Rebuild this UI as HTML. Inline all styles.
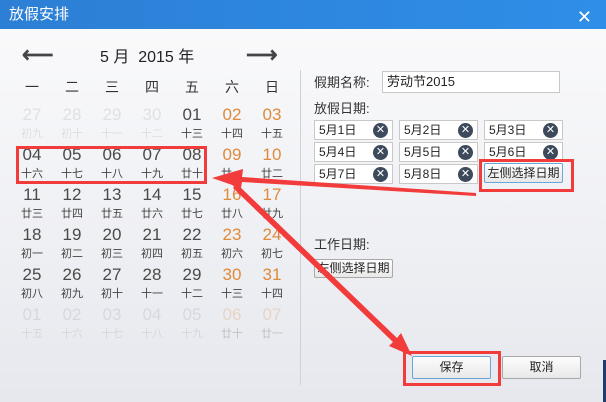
<!DOCTYPE html>
<html><head><meta charset="utf-8"><style>
*{margin:0;padding:0;box-sizing:border-box}
body{width:606px;height:402px;overflow:hidden;font-family:"Liberation Sans","Noto Sans CJK SC",sans-serif;background:linear-gradient(#fbfbfc,#e6e8ee);position:relative;color:#333}
.title{position:absolute;left:0;top:0;width:606px;height:29px;background:linear-gradient(90deg,#2c7fd4,#2f8ee8);color:#fff;font-size:15px;line-height:29px;padding-left:9px}
.x{position:absolute;right:14px;top:3px;color:#fff;font-size:18px}
.a{position:absolute;font-size:15px}
.c{position:absolute;width:40px;text-align:center}
.n{font-size:17px;color:#4a4a4a}
.l{font-size:11px;color:#444}
.o{color:#e08a3c}
.f{opacity:.12}
.fo{opacity:.25}
.lbl{position:absolute;font-size:13px;color:#333}
.box{position:absolute;width:79px;height:20px;background:#fff;border:1px solid #c8c8c8;font-size:12px;line-height:18px;padding-left:4px;color:#222}
.box i{position:absolute;right:4px;top:2px;width:15px;height:15px;border-radius:50%;background:#3c4a5c;color:#fff;font-style:normal;font-size:11px;line-height:15px;text-align:center}
.btn{position:absolute;border:1px solid #a8a8a8;background:linear-gradient(#fdfdfd,#e8e8e8);font-size:12px;text-align:center;border-radius:2px;color:#222}
.rb{position:absolute;border:3px solid #f23b3b}
</style></head><body>
<div class="title">放假安排<span class="x">✕</span></div>
<div class="a" style="left:22px;top:42px;font-size:22px;color:#444;font-weight:bold">⟵</div>
<div class="a" style="left:100px;top:43px;font-size:16px;color:#222">5 月&nbsp; 2015 年</div>
<div class="a" style="left:246px;top:42px;font-size:22px;color:#444;font-weight:bold">⟶</div>
<div style="position:absolute;left:300px;top:70px;width:1px;height:315px;background:#cfd1d6"></div>
<div id="cal"></div>
<div class="lbl" style="left:314px;top:72px">假期名称:</div>
<div class="box" style="left:382px;top:71px;width:178px;height:22px;font-size:13px;line-height:20px">劳动节2015</div>
<div class="lbl" style="left:314px;top:98px">放假日期:</div>
<div class="box" style="left:314px;top:120px">5月1日<i>✕</i></div>
<div class="box" style="left:399px;top:120px">5月2日<i>✕</i></div>
<div class="box" style="left:484px;top:120px">5月3日<i>✕</i></div>
<div class="box" style="left:314px;top:142px">5月4日<i>✕</i></div>
<div class="box" style="left:399px;top:142px">5月5日<i>✕</i></div>
<div class="box" style="left:484px;top:142px">5月6日<i>✕</i></div>
<div class="box" style="left:314px;top:164px">5月7日<i>✕</i></div>
<div class="box" style="left:399px;top:164px">5月8日<i>✕</i></div>
<div class="btn" style="left:484px;top:163px;width:79px;height:20px;line-height:18px;border-color:#6aa6d8">左侧选择日期</div>
<div class="lbl" style="left:314px;top:234px">工作日期:</div>
<div class="btn" style="left:314px;top:259px;width:79px;height:19px;line-height:17px">左侧选择日期</div>
<div class="btn" style="left:412px;top:356px;width:79px;height:23px;line-height:21px;border-color:#6aa6d8">保存</div>
<div class="btn" style="left:502px;top:356px;width:79px;height:23px;line-height:21px">取消</div>
<div class="rb" style="left:16px;top:146px;width:191px;height:38px"></div>
<div class="rb" style="left:479px;top:159px;width:95px;height:33px"></div>
<div class="rb" style="left:403px;top:351px;width:98px;height:35px"></div>
<div style="position:absolute;left:603px;top:360px;width:3px;height:42px;background:#1e3c6e"></div>
<svg style="position:absolute;left:0;top:0" width="606" height="402">
<polygon points="476,193 242,177 243,169 212,178 241,188 242,182 476,196" fill="#f23b3b"/>
<line x1="232" y1="184" x2="300" y2="250" stroke="#f23b3b" stroke-width="1"/>
<polygon points="237,184 397,338 401,333 412,356 389,346 393,342 233,188" fill="#f23b3b"/>
</svg>
<script>
var d=[["27","初九",2],["28","初十",2],["29","十一",2],["30","十二",2],["01","十三",0],["02","十四",1],["03","十五",1],
["04","十六",0],["05","十七",0],["06","十八",0],["07","十九",0],["08","廿十",0],["09","廿一",1],["10","廿二",1],
["11","廿三",0],["12","廿四",0],["13","廿五",0],["14","廿六",0],["15","廿七",0],["16","廿八",1],["17","廿九",1],
["18","初一",0],["19","初二",0],["20","初三",0],["21","初四",0],["22","初五",0],["23","初六",1],["24","初七",1],
["25","初八",0],["26","初九",0],["27","初十",0],["28","十一",0],["29","十二",0],["30","十三",1],["31","十四",1],
["01","十五",2],["02","十六",2],["03","十七",2],["04","十八",2],["05","十九",2],["06","廿十",3],["07","廿一",3]];
var w="一二三四五六日",h="";
for(var i=0;i<7;i++)h+='<div class="c" style="left:'+(12+i*40)+'px;top:77px;font-size:14px;color:#333">'+w[i]+'</div>';
d.forEach(function(e,k){var x=12+(k%7)*40,y=105+Math.floor(k/7)*40;var cl=e[2]==1?' o':e[2]==2?' f':e[2]==3?' o fo':'';
h+='<div class="c'+cl+'" style="left:'+x+'px;top:'+y+'px"><div class="n'+(e[2]&1?' o':'')+'">'+e[0]+'</div><div class="l">'+e[1]+'</div></div>';});
document.getElementById('cal').innerHTML=h;
</script>
</body></html>
